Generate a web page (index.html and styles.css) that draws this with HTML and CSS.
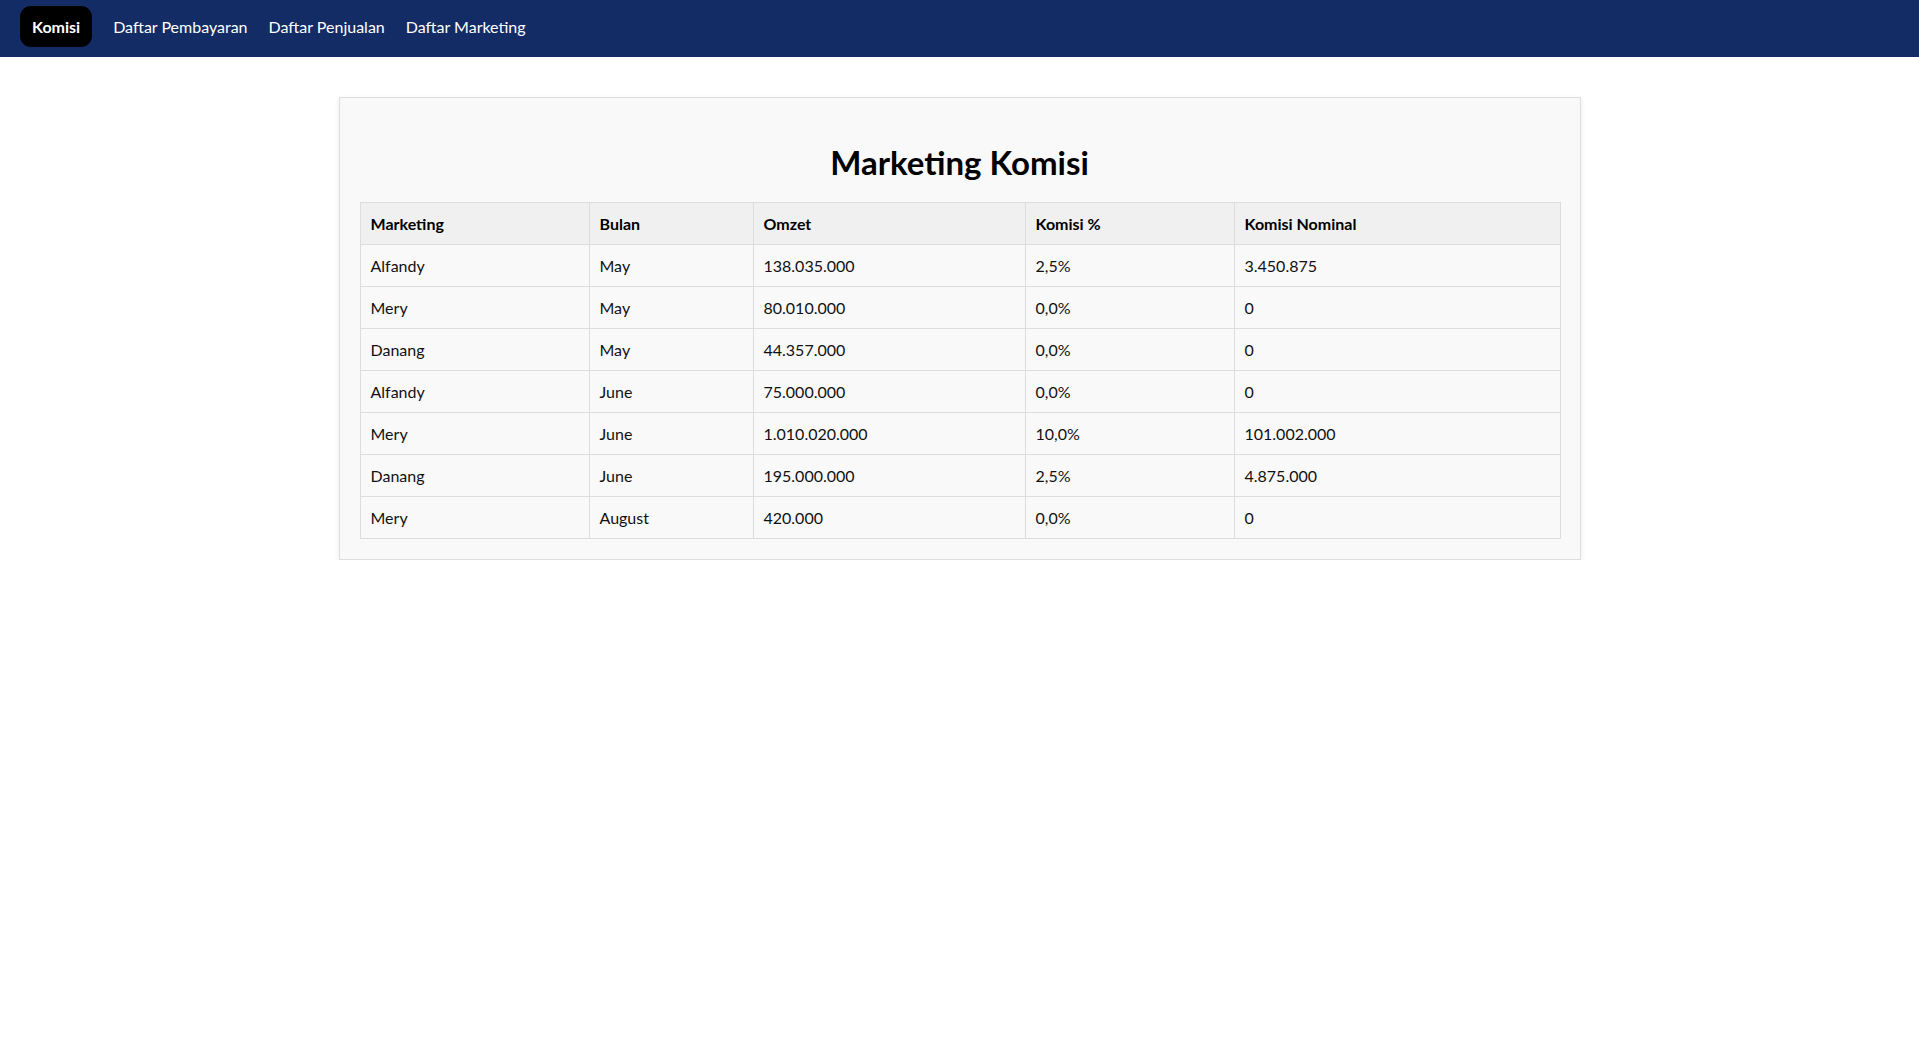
FILE: index.html
```html
<!DOCTYPE html>
<html lang="id">
<head>
<meta charset="utf-8">
<title>Marketing Komisi</title>
<link rel="stylesheet" href="styles.css">
</head>
<body>
<nav class="navbar">
  <a class="nav-link active" href="#">Komisi</a>
  <a class="nav-link" href="#">Daftar Pembayaran</a>
  <a class="nav-link" href="#">Daftar Penjualan</a>
  <a class="nav-link" href="#">Daftar Marketing</a>
</nav>
<main class="container">
  <h1 class="title">Marketing Komisi</h1>
  <table class="data-table">
    <thead>
      <tr><th class="c1">Marketing</th><th class="c2">Bulan</th><th class="c3">Omzet</th><th class="c4">Komisi %</th><th class="c5">Komisi Nominal</th></tr>
    </thead>
    <tbody>
      <tr><td>Alfandy</td><td>May</td><td>138.035.000</td><td>2,5%</td><td>3.450.875</td></tr>
      <tr><td>Mery</td><td>May</td><td>80.010.000</td><td>0,0%</td><td>0</td></tr>
      <tr><td>Danang</td><td>May</td><td>44.357.000</td><td>0,0%</td><td>0</td></tr>
      <tr><td>Alfandy</td><td>June</td><td>75.000.000</td><td>0,0%</td><td>0</td></tr>
      <tr><td>Mery</td><td>June</td><td>1.010.020.000</td><td>10,0%</td><td>101.002.000</td></tr>
      <tr><td>Danang</td><td>June</td><td>195.000.000</td><td>2,5%</td><td>4.875.000</td></tr>
      <tr><td>Mery</td><td>August</td><td>420.000</td><td>0,0%</td><td>0</td></tr>
    </tbody>
  </table>
</main>
</body>
</html>
```
FILE: styles.css
```css
* { box-sizing: border-box; }
html, body { margin: 0; padding: 0; background: #ffffff; }
body {
  font-family: "Segoe UI", Lato, "Open Sans", sans-serif;
  font-size: 16px;
  color: #111;
}
.navbar {
  display: flex;
  align-items: flex-start;
  gap: 21px;
  height: 57px;
  padding: 6px 0 0 20px;
  background: #132c66;
}
.nav-link {
  display: block;
  padding: 0;
  height: 41px;
  line-height: 41px;
  color: #ffffff;
  text-decoration: none;
  font-size: 16px;
  border-radius: 11px;
}
.nav-link.active {
  padding: 0 12px;
  background: #000000;
  font-weight: 700;
}
.container {
  width: 1242px;
  margin: 40px auto 0;
  padding: 20px;
  background: #f9f9f9;
  border: 1px solid #dedede;
  box-shadow: 0 2px 6px rgba(0, 0, 0, 0.08);
}
.title {
  margin: 23px 0 19px;
  font-size: 33px;
  line-height: 42px;
  font-weight: 700;
  text-align: center;
  color: #000;
}
.data-table {
  width: 1200px;
  border-collapse: collapse;
  table-layout: fixed;
}
.data-table th, .data-table td {
  border: 1px solid #dddddd;
  padding: 10px;
  text-align: left;
  line-height: 21px;
  font-size: 16px;
  color: #111;
}
.data-table th {
  background: #f0f0f0;
  font-weight: 700;
  color: #000;
}
.c1 { width: 229px; }
.c2 { width: 164px; }
.c3 { width: 272px; }
.c4 { width: 209px; }
.c5 { width: 326px; }
```
